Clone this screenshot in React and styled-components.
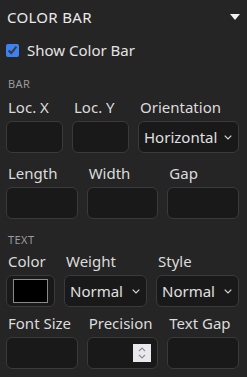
import React from "react";
import styled, { createGlobalStyle } from "styled-components";

const GlobalStyle = createGlobalStyle`
  html, body {
    margin: 0;
    padding: 0;
    background: #252525;
    color-scheme: dark;
  }
  body {
    font-family: "Noto Sans", "Open Sans", sans-serif;
    color: #e6e6e6;
  }
`;

const Panel = styled.div`
  width: 247px;
  box-sizing: border-box;
  padding: 0 8px 0 6px;
`;

const Header = styled.div`
  height: 34px;
  display: flex;
  align-items: center;
  justify-content: space-between;
  padding-left: 1px;
`;

const Title = styled.span`
  font-size: 15px;
  letter-spacing: 0.3px;
  text-transform: uppercase;
  color: #eaeaea;
`;

const Caret = styled.svg`
  width: 10px;
  height: 6px;
  margin-right: -1px;
`;

const CheckRow = styled.label`
  margin-top: 4px;
  height: 24px;
  display: flex;
  align-items: center;
  gap: 8px;
  font-size: 15px;
  color: #e4e4e4;
`;

const Check = styled.input`
  margin: 0;
  width: 13px;
  height: 13px;
  accent-color: #3b82f6;
`;

const Section = styled.div`
  margin-top: ${({ $top }) => $top}px;
  height: 14px;
  line-height: 14px;
  font-size: 11px;
  letter-spacing: 0.4px;
  color: #9b9b9b;
  padding-left: 2px;
`;

const Row = styled.div`
  display: grid;
  grid-template-columns: ${({ $cols }) => $cols};
  column-gap: 9px;
  margin-top: ${({ $top }) => $top}px;
`;

const Field = styled.div`
  display: flex;
  flex-direction: column;
  gap: 4px;
  min-width: 0;
`;

const Label = styled.span`
  height: 20px;
  line-height: 20px;
  font-size: 15px;
  color: #dcdcdc;
  padding-left: 2px;
  white-space: nowrap;
`;

const boxStyle = `
  box-sizing: border-box;
  width: 100%;
  height: 32px;
  margin: 0;
  background: #191919;
  border: 1px solid #3a3a3a;
  border-radius: 6px;
  color: #e0e0e0;
  font-family: inherit;
  font-size: 15px;
  outline: none;
`;

const Input = styled.input`
  ${boxStyle}
  padding: 0 6px;

  &::-webkit-inner-spin-button,
  &::-webkit-outer-spin-button {
    -webkit-appearance: none;
    margin: 0;
  }
`;

const Overlay = styled.div`
  position: relative;
`;

const Spinner = styled.svg`
  position: absolute;
  right: 7px;
  top: 7px;
  width: 18px;
  height: 18px;
  background: #e9e9ed;
  pointer-events: none;
`;

const Select = styled.select`
  ${boxStyle}
  appearance: none;
  -webkit-appearance: none;
  padding: 0 16px 0 5px;
`;

const Chevron = styled.svg`
  position: absolute;
  right: 7px;
  top: 14px;
  width: 8px;
  height: 5px;
  pointer-events: none;
`;

const ColorInput = styled.input`
  ${boxStyle}
  padding: 3px 6px;
  cursor: pointer;

  &::-webkit-color-swatch-wrapper {
    padding: 0;
  }
  &::-webkit-color-swatch {
    border: 1px solid #8a8a8a;
    border-radius: 0;
  }
`;

function LabeledInput({ label, children }) {
  return (
    <Field>
      <Label>{label}</Label>
      {children}
    </Field>
  );
}

function Dropdown({ value, options }) {
  return (
    <Overlay>
      <Select defaultValue={value}>
        {options.map((o) => (
          <option key={o} value={o}>
            {o}
          </option>
        ))}
      </Select>
      <Chevron viewBox="0 0 8 5">
        <path d="M0.7 0.7 L4 4 L7.3 0.7" fill="none" stroke="#d8d8d8" strokeWidth="1.2" />
      </Chevron>
    </Overlay>
  );
}

function NumberInput() {
  return (
    <Overlay>
      <Input type="number" />
      <Spinner viewBox="0 0 18 18">
        <path d="M6 7 L9 4 L12 7 M6 11 L9 14 L12 11" fill="none" stroke="#8e8e94" strokeWidth="1.2" />
      </Spinner>
    </Overlay>
  );
}

export default function App() {
  return (
    <>
      <GlobalStyle />
      <Panel>
        <Header>
          <Title>Color Bar</Title>
          <Caret viewBox="0 0 10 6">
            <path d="M0 0 H10 L5 6 Z" fill="#f2f2f2" />
          </Caret>
        </Header>
        <CheckRow>
          <Check type="checkbox" defaultChecked />
          Show Color Bar
        </CheckRow>

        <Section $top={15}>BAR</Section>
        <Row $cols="57px 57px 1fr" $top={6}>
          <LabeledInput label="Loc. X">
            <Input type="text" />
          </LabeledInput>
          <LabeledInput label="Loc. Y">
            <Input type="text" />
          </LabeledInput>
          <LabeledInput label="Orientation">
            <Dropdown value="Horizontal" options={["Horizontal", "Vertical"]} />
          </LabeledInput>
        </Row>
        <Row $cols="repeat(3, 1fr)" $top={10}>
          <LabeledInput label="Length">
            <Input type="text" />
          </LabeledInput>
          <LabeledInput label="Width">
            <Input type="text" />
          </LabeledInput>
          <LabeledInput label="Gap">
            <Input type="text" />
          </LabeledInput>
        </Row>

        <Section $top={14}>TEXT</Section>
        <Row $cols="49px 1fr 1fr" $top={4}>
          <LabeledInput label="Color">
            <ColorInput type="color" defaultValue="#000000" />
          </LabeledInput>
          <LabeledInput label="Weight">
            <Dropdown value="Normal" options={["Normal", "Bold"]} />
          </LabeledInput>
          <LabeledInput label="Style">
            <Dropdown value="Normal" options={["Normal", "Italic"]} />
          </LabeledInput>
        </Row>
        <Row $cols="repeat(3, 1fr)" $top={6}>
          <LabeledInput label="Font Size">
            <Input type="text" />
          </LabeledInput>
          <LabeledInput label="Precision">
            <NumberInput />
          </LabeledInput>
          <LabeledInput label="Text Gap">
            <Input type="text" />
          </LabeledInput>
        </Row>
      </Panel>
    </>
  );
}
